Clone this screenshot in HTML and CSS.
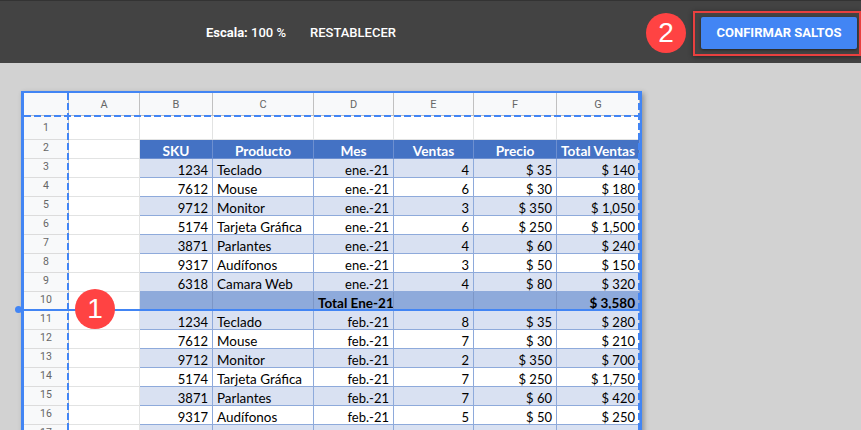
FILE: index.html
```html
<!DOCTYPE html>
<html lang="es">
<head>
<meta charset="utf-8">
<title>Saltos de página</title>
<link rel="stylesheet" href="styles.css">
</head>
<body>
<header class="toolbar">
  <div class="scale"><span class="scale-label">Escala:</span> 100 %</div>
  <div class="reset">RESTABLECER</div>
  <div class="badge badge-two">2</div>
  <div class="confirm-frame"><button class="confirm">CONFIRMAR SALTOS</button></div>
</header>
<main class="canvas">
  <div class="sheet">
    <table class="grid">
      <colgroup>
        <col class="c-head"><col class="c-a"><col class="c-b"><col class="c-c"><col class="c-d"><col class="c-e"><col class="c-f"><col class="c-g">
      </colgroup>
      <tr class="letters"><th></th><th>A</th><th>B</th><th>C</th><th>D</th><th>E</th><th>F</th><th>G</th></tr>
      <tr class="r-one"><th>1</th><td></td><td></td><td></td><td></td><td></td><td></td><td></td></tr>
      <tr class="title"><th>2</th><td></td><td class="h">SKU</td><td class="h">Producto</td><td class="h">Mes</td><td class="h">Ventas</td><td class="h">Precio</td><td class="h">Total Ventas</td></tr>
      <tr class="band"><th>3</th><td></td><td class="n">1234</td><td>Teclado</td><td class="n">ene.-21</td><td class="n">4</td><td class="n">$ 35</td><td class="n">$ 140</td></tr>
      <tr><th>4</th><td></td><td class="n">7612</td><td>Mouse</td><td class="n">ene.-21</td><td class="n">6</td><td class="n">$ 30</td><td class="n">$ 180</td></tr>
      <tr class="band"><th>5</th><td></td><td class="n">9712</td><td>Monitor</td><td class="n">ene.-21</td><td class="n">3</td><td class="n">$ 350</td><td class="n">$ 1,050</td></tr>
      <tr><th>6</th><td></td><td class="n">5174</td><td>Tarjeta Gráfica</td><td class="n">ene.-21</td><td class="n">6</td><td class="n">$ 250</td><td class="n">$ 1,500</td></tr>
      <tr class="band"><th>7</th><td></td><td class="n">3871</td><td>Parlantes</td><td class="n">ene.-21</td><td class="n">4</td><td class="n">$ 60</td><td class="n">$ 240</td></tr>
      <tr><th>8</th><td></td><td class="n">9317</td><td>Audífonos</td><td class="n">ene.-21</td><td class="n">3</td><td class="n">$ 50</td><td class="n">$ 150</td></tr>
      <tr class="band"><th>9</th><td></td><td class="n">6318</td><td>Camara Web</td><td class="n">ene.-21</td><td class="n">4</td><td class="n">$ 80</td><td class="n">$ 320</td></tr>
      <tr class="total"><th>10</th><td></td><td></td><td></td><td class="n">Total Ene-21</td><td></td><td></td><td class="n">$ 3,580</td></tr>
      <tr class="band"><th>11</th><td></td><td class="n">1234</td><td>Teclado</td><td class="n">feb.-21</td><td class="n">8</td><td class="n">$ 35</td><td class="n">$ 280</td></tr>
      <tr><th>12</th><td></td><td class="n">7612</td><td>Mouse</td><td class="n">feb.-21</td><td class="n">7</td><td class="n">$ 30</td><td class="n">$ 210</td></tr>
      <tr class="band"><th>13</th><td></td><td class="n">9712</td><td>Monitor</td><td class="n">feb.-21</td><td class="n">2</td><td class="n">$ 350</td><td class="n">$ 700</td></tr>
      <tr><th>14</th><td></td><td class="n">5174</td><td>Tarjeta Gráfica</td><td class="n">feb.-21</td><td class="n">7</td><td class="n">$ 250</td><td class="n">$ 1,750</td></tr>
      <tr class="band"><th>15</th><td></td><td class="n">3871</td><td>Parlantes</td><td class="n">feb.-21</td><td class="n">7</td><td class="n">$ 60</td><td class="n">$ 420</td></tr>
      <tr><th>16</th><td></td><td class="n">9317</td><td>Audífonos</td><td class="n">feb.-21</td><td class="n">5</td><td class="n">$ 50</td><td class="n">$ 250</td></tr>
      <tr class="band"><th>17</th><td></td><td></td><td></td><td></td><td></td><td></td><td></td></tr>
    </table>
    <div class="dash dash-top"></div>
    <div class="dash dash-left"></div>
    <div class="dash dash-right"></div>
    <div class="break-line"></div>
    <div class="break-dot"></div>
    <div class="badge badge-one">1</div>
  </div>
</main>
</body>
</html>
```

FILE: styles.css
```css
* { box-sizing: border-box; }
html, body { margin: 0; height: 100%; overflow: hidden; }
body { background: #d2d2d2; font-family: "Roboto", sans-serif; }

.toolbar {
  height: 63px;
  background: #434343;
  border-top: 1px solid #333;
  display: flex;
  align-items: center;
  color: #fff;
  font-size: 13px;
  font-weight: 500;
  padding-left: 206px;
  position: relative;
}
.scale { font-weight: 500; padding-top: 1px; }
.scale-label { font-weight: 700; }
.reset { margin-left: 24px; font-weight: 500; padding-top: 1px; }

.badge {
  width: 40px;
  height: 40px;
  border-radius: 50%;
  background: #ff4343;
  color: #fff;
  font-family: "Liberation Sans", sans-serif;
  font-size: 28px;
  line-height: 40px;
  text-align: center;
  flex: none;
}
.badge-two { margin-left: auto; margin-right: 7px; margin-top: 2px; }
.confirm-frame {
  width: 168px;
  height: 45px;
  margin-top: 2px;
  border: 2px solid #e8403f;
  padding: 4px 2px 5px 6px;
  box-shadow: 0 1px 5px rgba(0, 0, 0, .45);
}
.confirm {
  display: block;
  width: 100%;
  height: 100%;
  border: 0;
  border-radius: 2px;
  padding: 0;
  background: #4285f4;
  color: #fff;
  font-family: "Roboto", sans-serif;
  font-size: 13px;
  font-weight: 700;
  box-shadow: 0 1px 3px rgba(0, 0, 0, .5);
}

.canvas { padding: 28px 0 0 21px; }
.sheet {
  position: relative;
  width: 621px;
  background: #fff;
  border: 2px solid #4285f4;
  border-left-width: 3px;
  border-bottom: 0;
  box-shadow: 2px 2px 5px rgba(0, 0, 0, .3);
}
.grid {
  border-collapse: separate;
  border-spacing: 0;
  table-layout: fixed;
  width: 616px;
  font-family: "Lato", sans-serif;
  font-size: 13.45px;
  color: #000;
}
.c-head { width: 45px; }
.c-a { width: 71px; }
.c-b { width: 73px; }
.c-c { width: 101px; }
.c-d { width: 80px; }
.c-e { width: 80px; }
.c-f { width: 83px; }
.c-g { width: 83px; }

tr { height: 19px; }
th, td {
  padding: 0;
  border-right: 1px solid #e2e3e3;
  border-bottom: 1px solid #e2e3e3;
  white-space: nowrap;
  overflow: hidden;
  line-height: 14px;
}
th {
  background: #f8f9fa;
  font-family: "Roboto", sans-serif;
  font-size: 10.5px;
  font-weight: 400;
  color: #666;
  text-align: center;
  border-right-color: #c0c0c0;
  border-bottom-color: #dcdcdc;
  padding-bottom: 2px;
}
td { padding: 0 4px; vertical-align: bottom; }
.letters { height: 23px; }
.letters th { border-bottom-color: #c0c0c0; border-right-color: #c0c0c0; font-size: 11px; padding: 1px 0 0; }
.r-one { height: 24px; }
.r-one th { padding-bottom: 0; }
.n { text-align: right; font-size: 13px; }

.h {
  background: #4472c4;
  color: #fff;
  font-size: 13.7px;
  font-weight: 700;
  text-align: center;
  border-color: #6d8fd0;
  padding: 0;
}
.band td:nth-child(n+3) { background: #d9e1f2; }
tr:not(.title):not(.letters):not(.r-one):not(.total) td:nth-child(n+3) { border-color: #8eaadb; }
.total td:nth-child(n+3) {
  background: #8eaadb;
  font-weight: 700;
  font-size: 13.5px;
  border-color: #7c96c7;
}

.dash { position: absolute; }
.dash-top {
  left: 0;
  right: 0;
  top: 22px;
  height: 2px;
  background: repeating-linear-gradient(90deg, #4285f4 0 7px, transparent 7px 10px);
}
.dash-left {
  left: 43px;
  top: 0;
  bottom: 0;
  width: 2px;
  background: repeating-linear-gradient(180deg, #4285f4 0 7px, transparent 7px 10px);
}
.dash-right {
  right: 0;
  top: 0;
  bottom: 0;
  width: 2px;
  background: repeating-linear-gradient(180deg, #4285f4 0 7px, transparent 7px 10px);
}
.break-line {
  position: absolute;
  left: -6px;
  right: 0;
  top: 216px;
  height: 2px;
  background: #4285f4;
}
.break-dot {
  position: absolute;
  left: -9px;
  top: 213px;
  width: 7px;
  height: 7px;
  border-radius: 50%;
  background: #4285f4;
}
.badge-one {
  position: absolute;
  left: 51px;
  top: 196px;
}
```
